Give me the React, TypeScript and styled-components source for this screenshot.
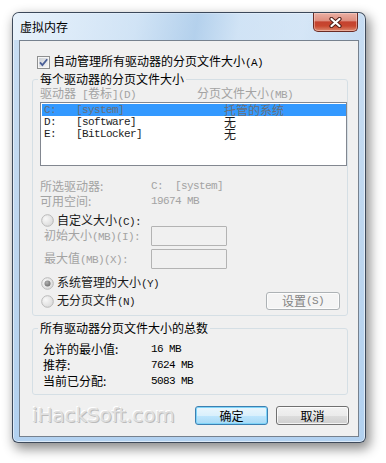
import React from "react";
import styled, { createGlobalStyle } from "styled-components";

const CJK = `"Noto Sans CJK SC", "Noto Sans", sans-serif`;
const MONO = `"Liberation Mono", "DejaVu Sans Mono", monospace`;

const GlobalStyle = createGlobalStyle`
  html, body { margin: 0; padding: 0; background: #ffffff; }
  body { font-family: ${CJK}; font-size: 12px; line-height: 14px; color: #000; }
  * { box-sizing: border-box; }
`;

const Page = styled.div`
  width: 386px;
  height: 463px;
  padding: 12px 0 0 12px;
  overflow: hidden;
`;

const Window = styled.div`
  width: 354px;
  height: 431px;
  border: 1px solid rgba(38, 48, 64, 0.85);
  border-radius: 7px 7px 6px 6px;
  background: linear-gradient(to bottom, #c9def3 0%, #bcd5ee 60%, #b2d1f0 100%);
  box-shadow: inset 0 0 0 1px rgba(255, 255, 255, 0.55), 3px 5px 12px 1px rgba(0, 0, 0, 0.45);
  display: flex;
  flex-direction: column;
  overflow: hidden;
`;

const TitleBar = styled.div`
  height: 27px;
  padding: 0 7px;
  display: flex;
  justify-content: space-between;
  align-items: flex-start;
  background: linear-gradient(100deg, rgba(235, 244, 252, 0.9) 0%, rgba(214, 231, 247, 0.6) 35%, rgba(160, 196, 230, 0.5) 52%, rgba(214, 231, 247, 0.6) 64%, rgba(226, 238, 250, 0.5) 82%, rgba(190, 214, 240, 0.3) 100%);
`;

const Title = styled.div`
  font-size: 12px;
  line-height: 27px;
  color: #000;
`;

const CloseButton = styled.div`
  width: 45px;
  height: 19px;
  border: 1px solid #6a2b24;
  border-top: none;
  border-radius: 0 0 5px 5px;
  background: linear-gradient(to bottom, #eab0a4 0%, #de8f80 42%, #c4422f 50%, #c8472f 72%, #dc8a6f 100%);
  box-shadow: inset 0 0 0 1px rgba(255, 220, 210, 0.45);
  display: flex;
  align-items: center;
  justify-content: center;
`;

const Body = styled.div`
  padding: 0 6px 5px 6px;
`;

const Client = styled.div`
  width: 340px;
  height: 397px;
  border: 1px solid #76818e;
  background: #f0f0f0;
  display: flex;
  flex-direction: column;
`;

const CheckRow = styled.label`
  margin: 14px 0 0 17px;
  height: 14px;
  display: flex;
  align-items: center;
  gap: 3px;
`;

const M = styled.span`
  font-family: ${MONO};
  font-size: 11px;
  letter-spacing: -0.6px;
  white-space: pre;
`;

const GroupBox = styled.fieldset<{ $mt: number }>`
  margin: ${(p) => p.$mt}px 10px 0 12px;
  padding: 0 0 5px 7px;
  border: 1px solid #d5dfe5;
  border-radius: 3px;
  min-width: 0;
  display: flex;
  flex-direction: column;
`;

const Legend = styled.legend`
  padding: 0 2px;
  margin-left: -2px;
  height: 14px;
  line-height: 14px;
  font-size: 12px;
  color: #000;
`;

const ColumnHeader = styled.div`
  display: grid;
  grid-template-columns: 157px 1fr;
  height: 14px;
  line-height: 14px;
  color: #a3a3a3;
`;

const ListBox = styled.div`
  margin-top: 2px;
  height: 64px;
  border: 1px solid #828790;
  background: #ffffff;
  padding: 1px 0 0 1px;
`;

const ListRow = styled.div<{ $selected?: boolean }>`
  display: grid;
  grid-template-columns: 32px 148px 1fr;
  align-items: center;
  height: 12px;
  line-height: 12px;
  padding-left: 2px;
  background: ${(p) => (p.$selected ? "#3399ff" : "transparent")};
  color: ${(p) => (p.$selected ? "#6a6f78" : "#1c1c1c")};
`;

const ListCell = styled.span`
  font-size: 12px;
  line-height: 12px;
  white-space: nowrap;
`;

const InfoGrid = styled.div`
  margin-top: 12px;
  display: grid;
  grid-template-columns: 111px 1fr;
  grid-auto-rows: 15px;
  align-items: center;
  color: #a3a3a3;
`;

const RadioRow = styled.label<{ $mt: number; $h: number }>`
  margin: ${(p) => p.$mt}px 0 0 1px;
  height: ${(p) => p.$h}px;
  display: flex;
  align-items: center;
  gap: 3px;
  color: #1a1a1a;
`;

const FieldRow = styled.div<{ $mt: number }>`
  margin-top: ${(p) => p.$mt}px;
  padding-left: 4px;
  height: 20px;
  display: grid;
  grid-template-columns: 107px 76px;
  align-items: center;
  color: #a3a3a3;
`;

const TextBox = styled.div`
  width: 76px;
  height: 20px;
  border: 1px solid #b3b3b3;
  border-radius: 1px;
  background: #f0f0f0;
`;

const BottomRow = styled.div`
  margin-top: 2px;
  height: 18px;
  padding-right: 7px;
  display: flex;
  align-items: center;
  justify-content: space-between;
`;

const Button = styled.div<{ $default?: boolean; $disabled?: boolean; $w: number; $h: number }>`
  width: ${(p) => p.$w}px;
  height: ${(p) => p.$h}px;
  border: 1px solid ${(p) => (p.$default ? "#3c7fb1" : p.$disabled ? "#adb2b5" : "#707070")};
  border-radius: 3px;
  background: ${(p) =>
    p.$disabled
      ? "#f4f4f4"
      : p.$default
      ? "linear-gradient(to bottom, #eaf6fd 0%, #d9f0fc 50%, #bee6fd 51%, #a7d9f5 100%)"
      : "linear-gradient(to bottom, #f2f2f2 0%, #ebebeb 50%, #dddddd 51%, #cfcfcf 100%)"};
  box-shadow: inset 0 0 0 1px ${(p) => (p.$default ? "#7fd4f8" : "rgba(255,255,255,0.75)")};
  color: ${(p) => (p.$disabled ? "#838383" : "#000")};
  font-size: 12px;
  display: flex;
  align-items: center;
  justify-content: center;
`;

const TotalsGrid = styled.div`
  margin: 6px 0 0 3px;
  display: grid;
  grid-template-columns: 108px 1fr;
  grid-auto-rows: 16px;
  align-items: center;
  color: #000;
`;

const Value = styled.span<{ $color: string }>`
  font-family: ${MONO};
  font-size: 11px;
  letter-spacing: -0.6px;
  white-space: pre;
  color: ${(p) => p.$color};
`;

const Footer = styled.div`
  margin-top: 11px;
  height: 19px;
  padding: 0 9px 0 12px;
  display: flex;
  align-items: center;
  gap: 8px;
`;

const Watermark = styled.div`
  flex: 1;
  font-family: "DejaVu Sans", sans-serif;
  font-size: 20px;
  line-height: 19px;
  letter-spacing: -0.1px;
  color: #e0e0e0;
  text-shadow: 1px 1px 0 #bcbcbc, -1px -1px 0 #ffffff, 0 0 1px #9f9f9f;
`;

const CheckIcon = () => (
  <svg width="13" height="13" viewBox="0 0 13 13">
    <defs>
      <linearGradient id="cbg" x1="0" y1="0" x2="1" y2="1">
        <stop offset="0" stopColor="#cbcfd5" />
        <stop offset="1" stopColor="#f6f6f6" />
      </linearGradient>
    </defs>
    <rect x="0.5" y="0.5" width="12" height="12" fill="#f6f6f6" stroke="#8e8f8f" />
    <rect x="2" y="2" width="9" height="9" fill="url(#cbg)" />
    <path d="M3 6.3 L5.4 9 L10.2 3.2" fill="none" stroke="#4a5f97" strokeWidth="1.8" />
  </svg>
);

const RadioIcon = ({ checked }: { checked?: boolean }) => (
  <svg width="13" height="13" viewBox="0 0 13 13">
    <defs>
      <radialGradient id="rbg" cx="0.35" cy="0.35" r="0.8">
        <stop offset="0" stopColor="#f8f8f8" />
        <stop offset="1" stopColor="#d6d6d6" />
      </radialGradient>
      <radialGradient id="rdot" cx="0.4" cy="0.35" r="0.7">
        <stop offset="0" stopColor="#b0b0b0" />
        <stop offset="1" stopColor="#6e6e6e" />
      </radialGradient>
    </defs>
    <circle cx="6.5" cy="6.5" r="5.8" fill="url(#rbg)" stroke="#b9b9b9" />
    {checked && <circle cx="6.5" cy="6.5" r="3" fill="url(#rdot)" />}
  </svg>
);

const CloseIcon = () => (
  <svg width="13" height="11" viewBox="0 0 13 11">
    <path d="M2.5 2 L10.5 9 M10.5 2 L2.5 9" stroke="#4e1e18" strokeWidth="4.2" strokeLinecap="round" fill="none" />
    <path d="M2.5 2 L10.5 9 M10.5 2 L2.5 9" stroke="#ffffff" strokeWidth="2.3" strokeLinecap="round" fill="none" />
  </svg>
);

const drives = [
  { d: "C:", label: "[system]", size: "托管的系统", selected: true },
  { d: "D:", label: "[software]", size: "无" },
  { d: "E:", label: "[BitLocker]", size: "无" },
];

export default function App() {
  return (
    <Page>
      <GlobalStyle />
      <Window>
        <TitleBar>
          <Title>虚拟内存</Title>
          <CloseButton>
            <CloseIcon />
          </CloseButton>
        </TitleBar>
        <Body>
          <Client>
            <CheckRow>
              <CheckIcon />
              <span>
                自动管理所有驱动器的分页文件大小<M>(A)</M>
              </span>
            </CheckRow>

            <GroupBox $mt={3}>
              <Legend>每个驱动器的分页文件大小</Legend>
              <ColumnHeader>
                <span>
                  驱动器<M> [</M>卷标<M>](D)</M>
                </span>
                <span>
                  分页文件大小<M>(MB)</M>
                </span>
              </ColumnHeader>
              <ListBox>
                {drives.map((r) => (
                  <ListRow key={r.d} $selected={r.selected}>
                    <M>{r.d}</M>
                    <M>{r.label}</M>
                    <ListCell>{r.size}</ListCell>
                  </ListRow>
                ))}
              </ListBox>
              <InfoGrid>
                <span>所选驱动器:</span>
                <Value $color="#a3a3a3">{"C:  [system]"}</Value>
                <span>可用空间:</span>
                <Value $color="#a3a3a3">19674 MB</Value>
              </InfoGrid>
              <RadioRow $mt={7} $h={11}>
                <RadioIcon />
                <span>
                  自定义大小<M>(C):</M>
                </span>
              </RadioRow>
              <FieldRow $mt={0}>
                <span>
                  初始大小<M>(MB)(I):</M>
                </span>
                <TextBox />
              </FieldRow>
              <FieldRow $mt={3}>
                <span>
                  最大值<M>(MB)(X):</M>
                </span>
                <TextBox />
              </FieldRow>
              <RadioRow $mt={7} $h={14}>
                <RadioIcon checked />
                <span>
                  系统管理的大小<M>(Y)</M>
                </span>
              </RadioRow>
              <BottomRow>
                <RadioRow $mt={0} $h={14}>
                  <RadioIcon />
                  <span>
                    无分页文件<M>(N)</M>
                  </span>
                </RadioRow>
                <Button $disabled $w={74} $h={18}>
                  设置<M>(S)</M>
                </Button>
              </BottomRow>
            </GroupBox>

            <GroupBox $mt={5}>
              <Legend>所有驱动器分页文件大小的总数</Legend>
              <TotalsGrid>
                <span>允许的最小值:</span>
                <Value $color="#000">16 MB</Value>
                <span>推荐:</span>
                <Value $color="#000">7624 MB</Value>
                <span>当前已分配:</span>
                <Value $color="#000">5083 MB</Value>
              </TotalsGrid>
            </GroupBox>

            <Footer>
              <Watermark>iHackSoft.com</Watermark>
              <Button $default $w={73} $h={19}>
                确定
              </Button>
              <Button $w={73} $h={19}>
                取消
              </Button>
            </Footer>
          </Client>
        </Body>
      </Window>
    </Page>
  );
}
